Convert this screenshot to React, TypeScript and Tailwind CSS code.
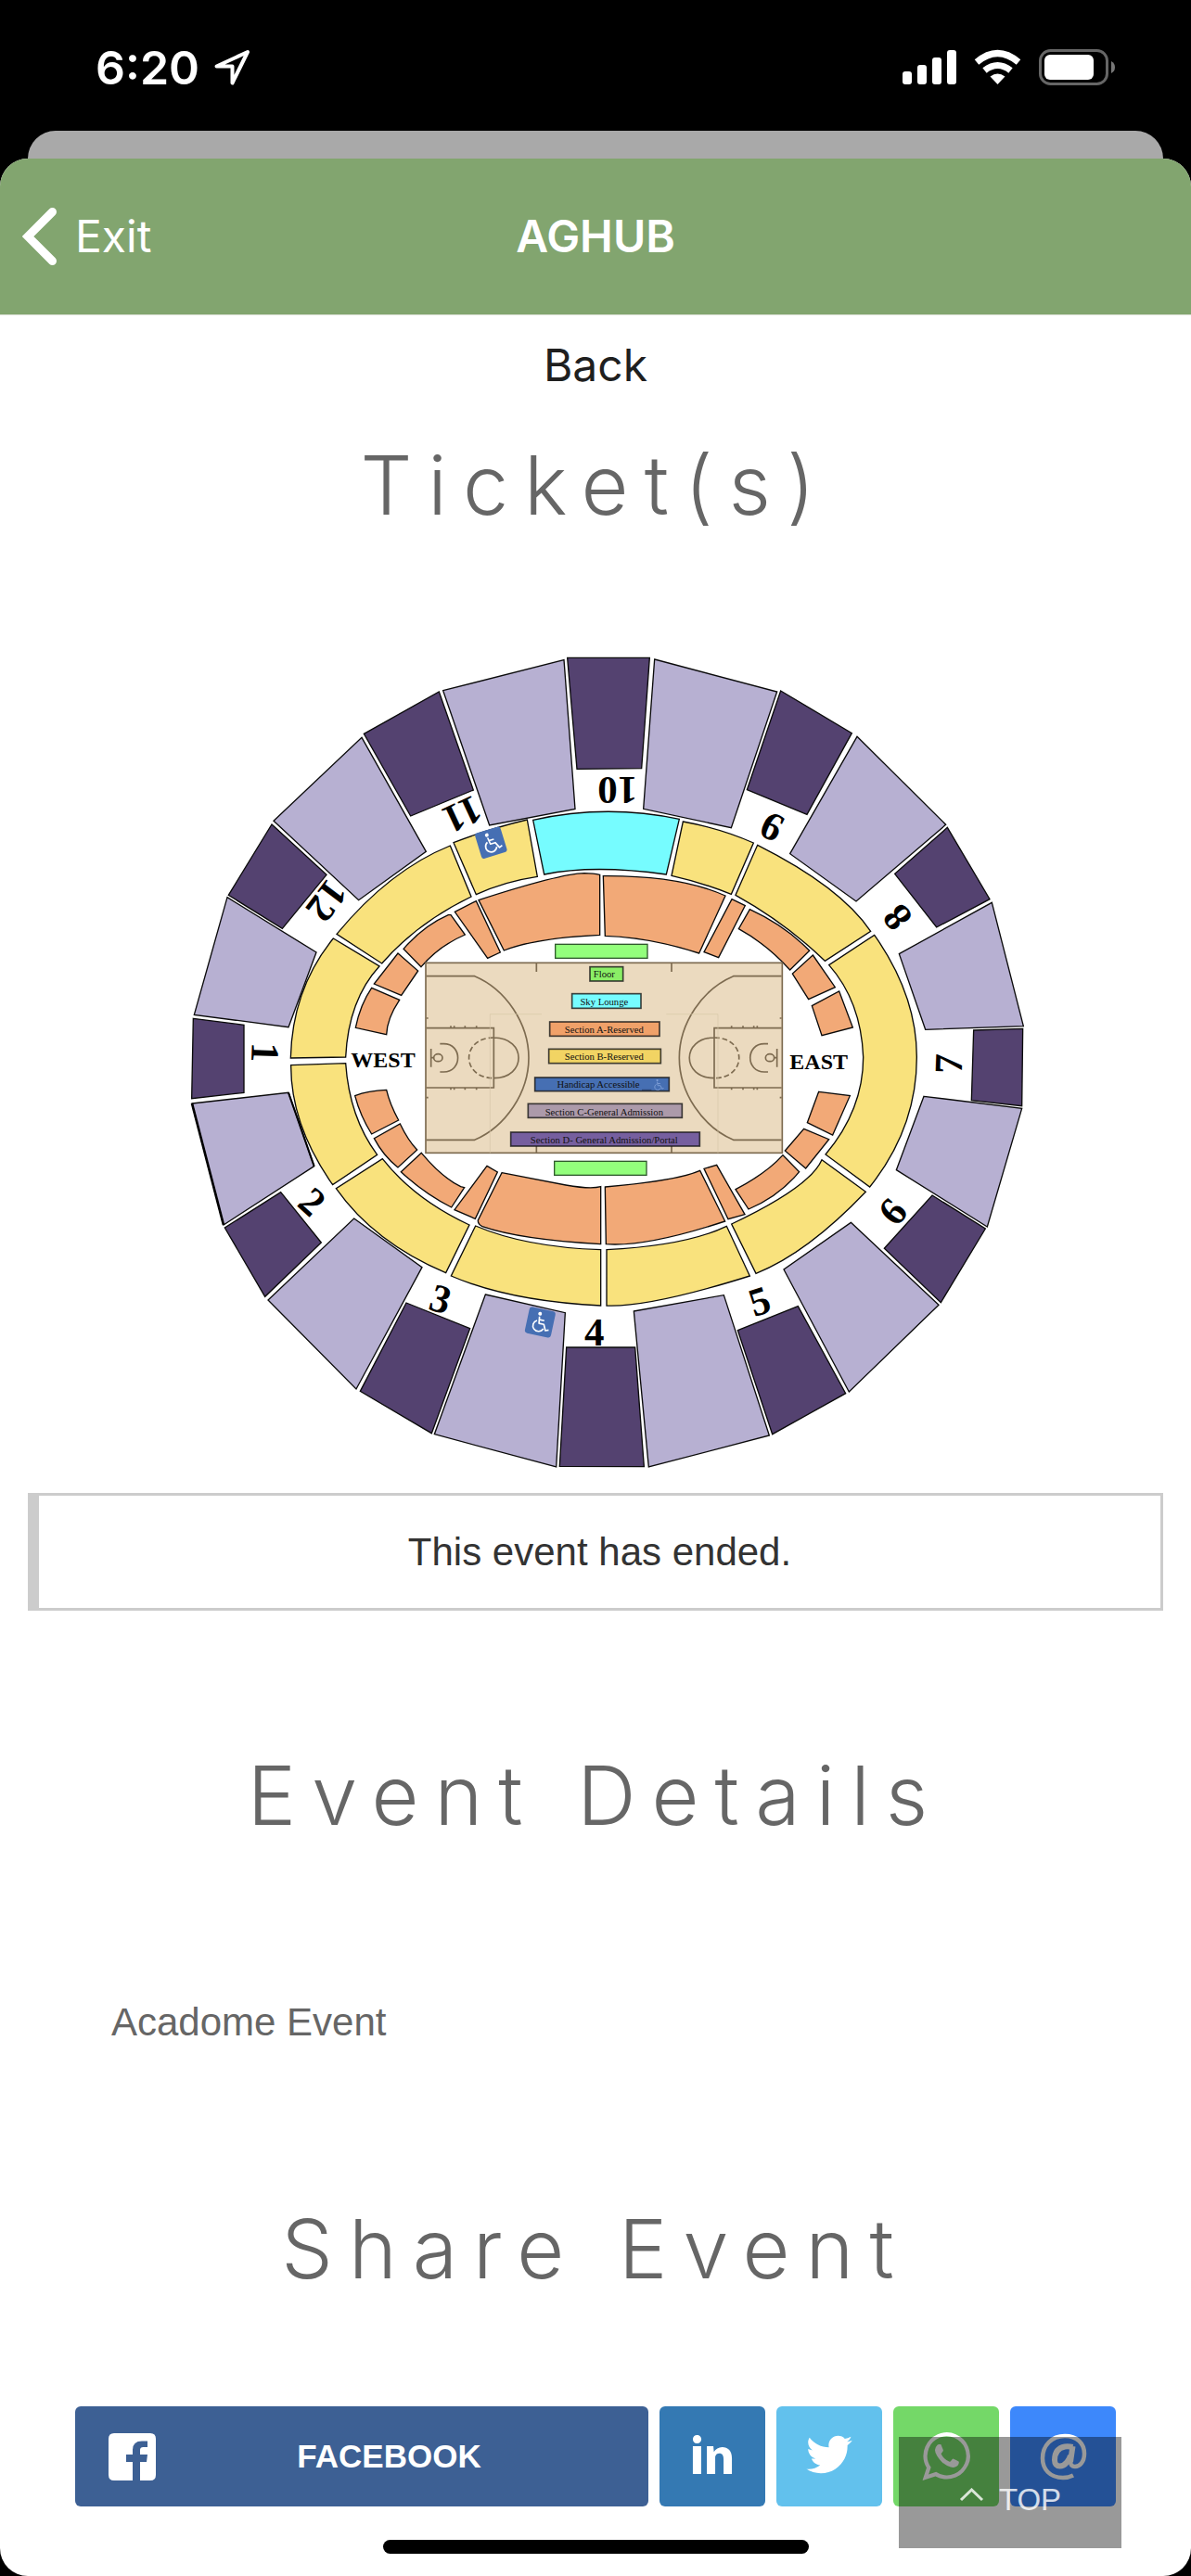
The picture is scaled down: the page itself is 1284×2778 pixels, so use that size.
import React from "react";

const LAVENDER = "#b7b0d2";
const PURPLE = "#544270";
const YELLOW = "#f9e27d";
const ORANGE = "#f2a977";
const CYAN = "#76fcff";
const GREEN = "#93ff7c";
const BLUE = "#466fb3";
const LINE = "#7d6b50";

type Block = { fill: string; paths: string[] };
type Quadrant = { x: number; y: number; blocks: Block[] };

const quadrants: Quadrant[] = [
  {
    x: 0,
    y: 0,
    blocks: [
      {
        fill: LAVENDER,
        paths: [
          "M863 164L1254 65L1290 547L1013 600Z",
          "M600 316L808 685L590 842L315 586Z",
          "M165 833L453 1011L363 1253L58 1213Z",
        ],
      },
      {
        fill: PURPLE,
        paths: [
          "M1265 58L1531 58L1505 416L1296 418Z",
          "M607 304L850 168L961 486L758 570Z",
          "M309 597L486 760L343 934L169 826Z",
          "M55 1225L219 1246L219 1465L50 1484Z",
        ],
      },
      {
        fill: YELLOW,
        paths: [
          "M897 656Q1010 612 1135 582L1168 766Q1060 782 970 824Z",
          "M886 666L954 831Q780 915 665 1047L519 952Q690 745 886 666Z",
          "M508 966L657 1056Q557 1165 548 1350L370 1353Q375 1130 508 966Z",
        ],
      },
      { fill: CYAN, paths: ["M1154 583Q1390 530 1627 580L1585 759Q1350 726 1190 759Z"] },
      {
        fill: ORANGE,
        paths: [
          "M978 842Q1240 757 1320 755Q1350 755 1370 760L1370 955Q1160 965 1060 1005Z",
          "M901 880L970 845L1048 1011L1007 1030Z",
          "M735 1000Q800 925 880 890L888 890L934 954Q850 990 792 1058Z",
          "M717 1014L782 1071L728 1150L640 1113Z",
          "M632 1126L722 1165Q682 1225 680 1277L580 1255Q595 1180 632 1126Z",
        ],
      },
    ],
  },
  {
    x: 1350,
    y: 0,
    blocks: [
      {
        fill: LAVENDER,
        paths: [
          "M197 63L593 168L445 608L161 547Z",
          "M852 313L1139 598L849 846L635 692Z",
          "M1288 850L1390 1250L1073 1261L988 1016Z",
        ],
      },
      {
        fill: PURPLE,
        paths: [
          "M605 165L835 302L690 565L496 485Z",
          "M1144 607L1281 839L1109 930L974 757Z",
          "M1229 1263L1388 1258L1385 1508L1222 1490Z",
        ],
      },
      {
        fill: YELLOW,
        paths: [
          "M289 588Q410 610 517 657L445 823Q350 785 252 763Z",
          "M530 664Q800 800 896 943L748 1039Q620 915 459 826Z",
          "M908 955Q1045 1150 1045 1350Q1045 1580 893 1770L750 1665Q872 1520 872 1350Q865 1170 761 1052Z",
        ],
      },
      {
        fill: ORANGE,
        paths: [
          "M31 764Q280 762 426 828L341 1014Q180 962 37 958Z",
          "M447 839L490 860L404 1028L357 1010Z",
          "M505 872Q620 925 698 1006L635 1068Q560 985 469 935Z",
          "M709 1020L781 1124L695 1163L643 1080Z",
          "M794 1137L838 1254L738 1280L706 1184Z",
        ],
      },
    ],
  },
  {
    x: 0,
    y: 1320,
    blocks: [
      {
        fill: LAVENDER,
        paths: [
          "M51 180L363 145L446 383L153 573Z",
          "M575 552L795 710L582 1104L297 816Z",
          "M1000 798L1258 857L1229 1356L835 1250Z",
        ],
      },
      {
        fill: PURPLE,
        paths: [
          "M338 467L469 630L287 805L157 582Z",
          "M744 825L950 908L826 1247L595 1111Z",
          "M1262 969L1484 969L1513 1355L1240 1354Z",
        ],
      },
      {
        fill: YELLOW,
        paths: [
          "M371 56L548 50Q560 225 650 346L506 443Q370 250 371 56Z",
          "M667 359Q770 490 948 573L872 728Q640 630 517 455Z",
          "M968 576Q1130 645 1373 653L1373 834Q1080 820 889 738Z",
        ],
      },
      {
        fill: ORANGE,
        paths: [
          "M680 136Q690 180 719 234L632 279Q595 220 578 155Q620 138 680 136Z",
          "M724 246Q750 300 779 330L717 387Q670 350 640 293Z",
          "M793 340Q860 420 920 449L932 452L890 516Q800 470 727 401Z",
          "M1005 382L1039 402L967 553L900 524Z",
          "M1053 404L1260 444Q1340 458 1373 449L1373 635Q1110 620 990 578Q975 570 976 558Z",
        ],
      },
    ],
  },
  {
    x: 1350,
    y: 1320,
    blocks: [
      {
        fill: LAVENDER,
        paths: [
          "M130 852L421 800L568 1254L178 1356Z",
          "M832 565L1116 832L826 1113L615 717Z",
          "M1068 157L1385 196L1273 579L979 395Z",
        ],
      },
      {
        fill: PURPLE,
        paths: [
          "M466 914L661 836L815 1118L578 1250Z",
          "M1095 477L1267 585L1123 824L940 649Z",
        ],
      },
      {
        fill: YELLOW,
        paths: [
          "M42 653Q300 640 430 577L505 738Q180 840 42 834Z",
          "M446 570Q700 450 738 362L880 466Q690 665 525 730Z",
        ],
      },
      {
        fill: ORANGE,
        paths: [
          "M37 450Q270 430 344 397L425 561Q170 645 40 635Z",
          "M357 391L398 379L489 539L435 554Z",
          "M459 458Q560 405 612 347L665 401Q600 480 501 522Z",
          "M680 262L761 296L686 390L619 333Z",
          "M728 142L829 155L773 282L691 242Z",
        ],
      },
    ],
  },
];

const portals = [
  { label: "10", x: 1427, y: 486, turn: 180 },
  { label: "11", x: 925, y: 565, turn: 155 },
  { label: "12", x: 487, y: 845, turn: 127 },
  { label: "1", x: 287, y: 1335, turn: 92 },
  { label: "2", x: 440, y: 1818, turn: 42 },
  { label: "3", x: 855, y: 2133, turn: 17 },
  { label: "4", x: 1352, y: 2240, turn: 0 },
  { label: "5", x: 1886, y: 2140, turn: -18 },
  { label: "6", x: 2317, y: 1850, turn: -50 },
  { label: "7", x: 2498, y: 1372, turn: -88 },
  { label: "8", x: 2332, y: 898, turn: -128 },
  { label: "9", x: 1926, y: 605, turn: 206 },
];

const legend = [
  { label: "Floor", x: 588, y: 128, w: 107, h: 46, tx: 634, ty: 162, fill: "#8aee66" },
  { label: "Sky Lounge", x: 530, y: 215, w: 223, h: 47, tx: 634, ty: 251, fill: CYAN },
  { label: "Section A-Reserved", x: 458, y: 306, w: 355, h: 46, tx: 634, ty: 341, fill: "#f0a169" },
  { label: "Section B-Reserved", x: 455, y: 394, w: 362, h: 46, tx: 634, ty: 430, fill: "#f2d463" },
  { label: "Handicap Accessible", x: 410, y: 486, w: 434, h: 44, tx: 615, ty: 519, fill: BLUE },
  { label: "Section C-General Admission", x: 388, y: 571, w: 498, h: 45, tx: 634, ty: 608, fill: "#ac9aaa" },
  { label: "Section D- General Admission/Portal", x: 332, y: 663, w: 611, h: 45, tx: 634, ty: 698, fill: "#765f9f" },
];

function AccessFigure() {
  return (
    <g fill="none" stroke="currentColor" strokeWidth="5" strokeLinejoin="round">
      <circle cx="-6" cy="-27" r="6" fill="currentColor" stroke="none" />
      <path d="M-6 -18L-3 4H13L22 23L32 19" />
      <path d="M-4 -8H12" />
      <path d="M-11 -4A18 18 0 1 0 14 18" />
    </g>
  );
}

function AccessSign({ x, y, turn }: { x: number; y: number; turn: number }) {
  return (
    <g transform={`translate(${x} ${y}) rotate(${turn})`} color="#fff">
      <rect x="-43" y="-43" width="86" height="86" rx="9" fill={BLUE} />
      <AccessFigure />
    </g>
  );
}

function HalfCourt() {
  return (
    <g fill="none" stroke={LINE} strokeWidth="5">
      <path d="M59 158H215C315 200 390 310 390 422C390 535 315 645 215 688H59" />
      <path d="M59 326H277V519H59M277 357C384 357 384 488 277 488" />
      <path d="M277 357C170 357 170 488 277 488" strokeDasharray="17 9" />
      <path d="M103 377H115C176 377 176 468 115 468H103M74 393V452M74 422H82" />
      <ellipse cx="97" cy="422" rx="14" ry="12" />
      <path d="M138 319v7M149 319v7M184 319v7M221 319v7M138 519v7M149 519v7M184 519v7M221 519v7M59 294h6M59 551h6" />
      <path d="M415 116v28M415 702v28" />
      <path d="M265 730V281H432" stroke="#d8c7a8" strokeWidth="2" />
    </g>
  );
}

function SeatingChart() {
  return (
    <svg
      viewBox="-48 30 2808 2670"
      className="mx-auto mt-[117px] block w-[936px] max-w-full"
      role="img"
      aria-label="Seating chart"
      fontFamily="'Liberation Serif', serif"
    >
      {quadrants.map((q) => (
        <g key={`${q.x}-${q.y}`} transform={`translate(${q.x} ${q.y})`} stroke="#0a0a0a" strokeWidth="4">
          {q.blocks.map((b) => (
            <g key={b.fill} fill={b.fill}>
              {b.paths.map((d) => (
                <path key={d} d={d} />
              ))}
            </g>
          ))}
        </g>
      ))}
      <path d="M51 1500L153 1893" stroke="#000" strokeWidth="8" />
      <path d="M363 1465L446 1703" stroke="#000" strokeWidth="6" />
      <AccessSign x={1018} y={656} turn={-17} />
      <AccessSign x={1177} y={2208} turn={12} />

      <g fontWeight="bold" textAnchor="middle" fill="#000">
        {portals.map((p) => (
          <text key={p.label} transform={`translate(${p.x} ${p.y}) rotate(${p.turn})`} y="43" fontSize="129">
            {p.label}
          </text>
        ))}
        <text x="669" y="1382" fontSize="72">
          WEST
        </text>
        <text x="2078" y="1388" fontSize="72">
          EAST
        </text>
      </g>

      <g transform="translate(750 930)">
        <rect x="476" y="55" width="298" height="45" fill={GREEN} stroke="#2f5a2c" strokeWidth="4" />
        <rect x="473" y="757" width="298" height="45" fill={GREEN} stroke="#2f5a2c" strokeWidth="4" />
        <rect x="57" y="115" width="1153" height="615" fill="#ebdabf" stroke={LINE} strokeWidth="5" />
        <HalfCourt />
        <g transform="translate(1267 0) scale(-1 1)">
          <HalfCourt />
        </g>
        {legend.map((l) => (
          <g key={l.label}>
            <rect x={l.x} y={l.y} width={l.w} height={l.h} fill={l.fill} stroke="#161616" strokeOpacity="0.8" strokeWidth="5" />
            <text x={l.tx} y={l.ty} fontSize="32" textAnchor="middle" fill="#111">
              {l.label}
            </text>
          </g>
        ))}
        <path d="M756 526H787" stroke="#1c2c4c" strokeWidth="2" />
        <g transform="translate(809 510) scale(.55)" color="#7f9fd6">
          <AccessFigure />
        </g>
      </g>
    </svg>
  );
}

function StatusBar() {
  return (
    <div className="flex h-[141px] items-center justify-between pt-1 pr-[81px] pl-[103px] text-white">
      <div className="flex items-center gap-4">
        <span className="font-[Inter,sans-serif] text-[50px] leading-[60px] font-semibold">6:20</span>
        <svg viewBox="0 0 39 39" className="size-[39px]" aria-hidden="true">
          <path d="M36 3L19.500 36.500V18.500H2.500Z" fill="none" stroke="#fff" strokeWidth="4" strokeLinejoin="round" />
        </svg>
      </div>
      <svg viewBox="973 53 230 39" className="h-[39px] w-[230px]" aria-hidden="true">
        <g fill="#fff">
          <rect x="973" y="77" width="10" height="14" rx="3" />
          <rect x="989" y="70" width="10" height="21" rx="3" />
          <rect x="1005" y="62" width="10" height="29" rx="3" />
          <rect x="1021" y="54" width="10" height="37" rx="3" />
          <path d="M1075.500 91L1067.500 82.500Q1075.500 76.500 1083.500 82.500Z" />
          <rect x="1126" y="59" width="53" height="27" rx="6" />
        </g>
        <g fill="none" stroke="#fff" strokeWidth="7">
          <path d="M1061.500 76Q1075.500 65 1089.500 76" />
          <path d="M1053 67Q1075.500 48 1098 67" />
        </g>
        <rect x="1121.500" y="54.500" width="72" height="36" rx="11" fill="none" stroke="#666" strokeWidth="3" />
        <path d="M1198 66Q1202 68 1202 72.500T1198 79Z" fill="#777" />
      </svg>
    </div>
  );
}

function SectionHeading({ children }: { children: React.ReactNode }) {
  return (
    <h2 className="text-center font-[Inter,sans-serif] text-[88px] leading-[120px] font-light tracking-[17px] text-[#666]">
      {children}
    </h2>
  );
}

function ShareLink({ label, className, children }: { label: string; className: string; children: React.ReactNode }) {
  return (
    <a href="#share" aria-label={label} className={`flex w-[114px] shrink-0 items-center justify-center rounded-md ${className}`}>
      {children}
    </a>
  );
}

function ShareBar() {
  return (
    <div id="share" className="mx-[81px] mt-[110px] flex h-[108px] gap-3 text-white">
      <a href="#share" className="flex flex-1 items-center rounded-md bg-[#3d6094] pr-7 pl-9">
        <svg viewBox="0 0 51 51" className="size-[51px]" aria-hidden="true">
          <path
            fill="#fff"
            d="M6 0H45Q51 0 51 6V45Q51 51 45 51H34V31H41L42 23H34V18Q34 15 37.500 15H42V8.500H36Q26 8.500 26 18V23H19V31H26V51H6Q0 51 0 45V6Q0 0 6 0Z"
          />
        </svg>
        <span className="flex-1 text-center text-[35px] leading-[42px] font-bold">FACEBOOK</span>
      </a>
      <ShareLink label="LinkedIn" className="bg-[#3479b3]">
        <svg viewBox="0 0 40 40" className="mb-1 size-[72px]" fill="#fff" aria-hidden="true">
          <path d="m13.3 31.7h-5v-16.7h5v16.7z m18.4 0h-5v-8.900c0-2.400-0.900-3.500-2.500-3.500-1.300 0-2.100 0.600-2.500 1.900v10.500h-5s0-15 0-16.700h3.900l0.300 3.300h0.100c1-1.600 2.700-2.800 4.900-2.800 1.700 0 3.100 0.500 4.200 1.700 1 1.200 1.600 2.800 1.600 5.100v9.400z m-18.300-20.900c0 1.400-1.100 2.500-2.600 2.500s-2.500-1.100-2.500-2.500 1.100-2.500 2.500-2.500 2.600 1.200 2.600 2.500z" />
        </svg>
      </ShareLink>
      <ShareLink label="Twitter" className="bg-[#62c1ed]">
        <svg viewBox="0 0 40 40" className="mb-1 size-[66px]" fill="#fff" aria-hidden="true">
          <path d="m31.5 11.7c1.300-0.800 2.200-2 2.700-3.400-1.400 0.700-2.700 1.200-4 1.400-1.100-1.200-2.600-1.900-4.400-1.900-1.700 0-3.200 0.600-4.400 1.800-1.200 1.200-1.800 2.700-1.800 4.400 0 0.500 0.100 0.900 0.200 1.300-5.100-0.100-9.400-2.300-12.700-6.400-0.600 1-0.900 2.100-0.900 3.100 0 2.200 1 3.900 2.800 5.200-1.100-0.100-2-0.400-2.800-0.800 0 1.500 0.500 2.800 1.400 4 0.900 1.100 2.100 1.800 3.500 2.100-0.500 0.100-1 0.200-1.600 0.200-0.500 0-0.900 0-1.100-0.100 0.400 1.200 1.100 2.300 2.100 3 1.100 0.800 2.300 1.200 3.600 1.300-2.200 1.700-4.700 2.600-7.600 2.600-0.700 0-1.200 0-1.500-0.100 2.800 1.900 6 2.800 9.500 2.800 3.500 0 6.700-0.900 9.400-2.700 2.800-1.800 4.800-4.100 6.100-6.700 1.300-2.600 1.900-5.300 1.900-8.100v-0.800c1.300-0.900 2.300-2 3.100-3.200-1.100 0.500-2.300 0.800-3.500 1z" />
        </svg>
      </ShareLink>
      <ShareLink label="WhatsApp" className="bg-[#74d868]">
        <svg viewBox="0 0 40 40" className="size-[60px]" fill="#fff" aria-hidden="true">
          <path d="m25 21.7q0.300 0 2.200 1t2 1.200q0 0.100 0 0.300 0 0.800-0.400 1.700-0.300 0.900-1.600 1.500t-2.200 0.600q-1.300 0-4.300-1.400-2.200-1-3.800-2.600t-3.300-4.200q-1.600-2.300-1.600-4.300v-0.200q0.100-2 1.700-3.500 0.500-0.500 1.200-0.500 0.100 0 0.400 0t0.400 0.100q0.400 0 0.600 0.100t0.300 0.600q0.200 0.500 0.800 2t0.500 1.700q0 0.500-0.800 1.300t-0.700 1q0 0.200 0.100 0.300 0.700 1.700 2.300 3.100 1.200 1.200 3.300 2.200 0.300 0.200 0.500 0.200 0.400 0 1.200-1.100t1.200-1.100z m-4.500 11.900q2.800 0 5.400-1.100t4.500-3 3-4.500 1.100-5.400-1.100-5.500-3-4.500-4.500-2.900-5.400-1.200-5.500 1.200-4.500 2.900-2.900 4.500-1.200 5.500q0 4.500 2.700 8.200l-1.700 5.200 5.400-1.800q3.500 2.400 7.700 2.400z m0-30.900q3.400 0 6.500 1.400t5.400 3.600 3.500 5.300 1.400 6.600-1.400 6.500-3.500 5.300-5.400 3.600-6.500 1.400q-4.400 0-8.200-2.100l-9.300 3 3-9.100q-2.400-3.900-2.400-8.600 0-3.500 1.400-6.600t3.600-5.300 5.300-3.600 6.600-1.400z" />
        </svg>
      </ShareLink>
      <ShareLink label="Email" className="bg-[#3d88fb]">
        <svg viewBox="0 0 51 51" className="size-[51px]" fill="none" stroke="#fff" aria-hidden="true">
          <path
            d="M36 45.500Q31 48 25 48C11 48 3 39 3 27C3 13 13 3 27 3C40 3 48 11 48 22C48 31 43 36 38 36C34 36 32.500 33 33 29"
            strokeWidth="4.500"
          />
          <path d="M35.500 15Q31 14 27 14.500C19 16 16 22 16 29C16 33 18 35.500 21.500 35.500C28 35.500 32 28 33 24M33 31L35.500 14" strokeWidth="6" />
        </svg>
      </ShareLink>
    </div>
  );
}

export default function App() {
  return (
    <div className="flex min-h-screen flex-col bg-black font-['Liberation_Sans',Arial,sans-serif]">
      <StatusBar />
      <div className="mx-[30px] h-[30px] rounded-t-[30px] bg-[#a9a9a9]" />
      <div className="relative flex flex-1 flex-col overflow-hidden rounded-[30px] bg-white">
        <header className="grid h-[169px] grid-cols-3 items-center border-b border-[#d5dccf] bg-[#82a56f] px-6 font-[Inter,sans-serif] text-white">
          <button className="flex items-center gap-5 text-left text-[48px] leading-[60px]">
            <svg viewBox="0 0 37 62" className="h-[62px] w-[37px]" aria-hidden="true">
              <path d="M32.500 4.500L6 31L32.500 57.500" fill="none" stroke="#fff" strokeWidth="9" strokeLinecap="round" />
            </svg>
            Exit
          </button>
          <h1 className="text-center text-[48px] leading-[60px] font-semibold">AGHUB</h1>
        </header>
        <main className="flex flex-col">
          <button className="mx-auto h-[108px] font-[Inter,sans-serif] text-[48px] leading-[60px] text-[#1f1f1f]">Back</button>
          <div className="mt-[15px]">
            <SectionHeading>Ticket(s)</SectionHeading>
          </div>
          <SeatingChart />
          <p className="mx-[30px] mt-5 flex h-[127px] items-center justify-center border-[3px] border-l-[12px] border-[#ccc] text-[42px] leading-[60px] text-[#333]">
            This event has ended.
          </p>
          <div className="mt-[139px]">
            <SectionHeading>Event Details</SectionHeading>
          </div>
          <p className="mx-[120px] mt-[155px] text-[42px] leading-[60px] text-[#666]">Acadome Event</p>
          <div className="mt-[154px]">
            <SectionHeading>Share Event</SectionHeading>
          </div>
          <ShareBar />
        </main>
        <div className="mx-auto mt-auto mb-6 h-[15px] w-[459px] rounded-full bg-black" />
        <button className="absolute right-[75px] bottom-[30px] flex h-[120px] w-[240px] items-center justify-center gap-4 bg-black/40 pt-4 text-[33px] leading-[36px] text-white/80">
          <svg viewBox="0 0 27 15" className="mb-3 h-[15px] w-[27px]" aria-hidden="true">
            <path d="M2 13L13.500 2L25 13" fill="none" stroke="currentColor" strokeWidth="3" />
          </svg>
          TOP
        </button>
      </div>
    </div>
  );
}
